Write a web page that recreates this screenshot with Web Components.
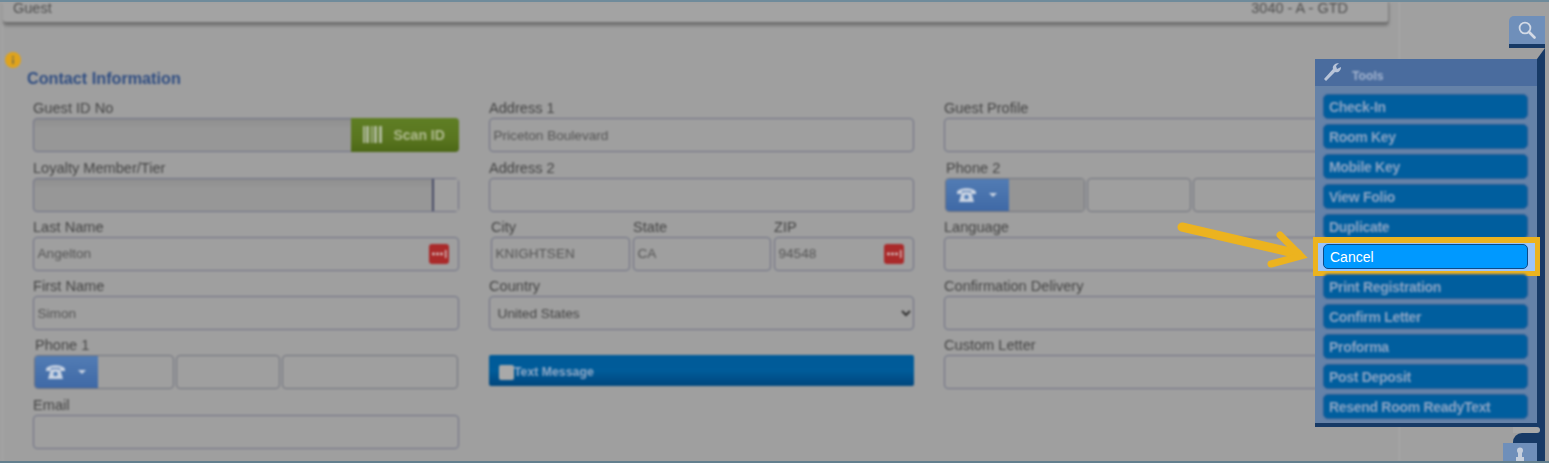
<!DOCTYPE html>
<html>
<head>
<meta charset="utf-8">
<title>Contact Information</title>
<style>
    html, body{
        margin: 0;
        height: 463px;
        overflow: hidden;
        background: #9f9f9f;
        font-family: "Liberation Sans", Arial, sans-serif;
    }
</style>
</head>
<body>
<guest-page>
    <header-card slot="head" left="Guest" right="3040 - A - GTD"></header-card>

    <form-column slot="form">
        <form-field label="Guest ID No"><text-box fill><scan-button></scan-button></text-box></form-field>
        <form-field label="Loyalty Member/Tier"><text-box fill split></text-box></form-field>
        <form-field label="Last Name"><text-box badge>Angelton</text-box></form-field>
        <form-field label="First Name"><text-box>Simon</text-box></form-field>
        <form-field label="Phone 1" inset><phone-box></phone-box></form-field>
        <form-field label="Email"><text-box></text-box></form-field>
    </form-column>

    <form-column slot="form">
        <form-field label="Address 1"><text-box>Priceton Boulevard</text-box></form-field>
        <form-field label="Address 2"><text-box></text-box></form-field>
        <city-row></city-row>
        <form-field label="Country"><select-box>United States</select-box></form-field>
        <form-field label=""><text-button>Text Message</text-button></form-field>
    </form-column>

    <form-column slot="form">
        <form-field label="Guest Profile"><text-box></text-box></form-field>
        <form-field label="Phone 2" inset><phone-box fill></phone-box></form-field>
        <form-field label="Language"><text-box></text-box></form-field>
        <form-field label="Confirmation Delivery"><text-box></text-box></form-field>
        <form-field label="Custom Letter"><text-box></text-box></form-field>
    </form-column>

    <tools-panel slot="over">
        <tool-button>Check-In</tool-button>
        <tool-button>Room Key</tool-button>
        <tool-button>Mobile Key</tool-button>
        <tool-button>View Folio</tool-button>
        <tool-button>Duplicate</tool-button>
        <tool-button highlight>Cancel</tool-button>
        <tool-button>Print Registration</tool-button>
        <tool-button>Confirm Letter</tool-button>
        <tool-button>Proforma</tool-button>
        <tool-button>Post Deposit</tool-button>
        <tool-button>Resend Room ReadyText</tool-button>
    </tools-panel>
</guest-page>

<script>
const BLUR = "0.8px";

class GuestPage extends HTMLElement{
    constructor(){
        super();
        this.attachShadow({ mode: "open" });
    }

    connectedCallback(){
        this.shadowRoot.innerHTML = `
            <style>
                :host{
                    display: block;
                    position: relative;
                    width: 1549px;
                    height: 463px;
                    box-sizing: border-box;
                    border-top: 2px solid #6f8b9b;
                    border-bottom: 2px solid #637f8e;
                    overflow: hidden;
                    background: #a0a0a0;
                }
                #main{
                    width: 1398px;
                    height: 100%;
                    box-sizing: border-box;
                    margin-left: 2px;
                    border-left: 1px solid #a9a9a9;
                    border-right: 1px solid #ababab;
                    background: #9f9f9f;
                    filter: blur(${BLUR});
                }
                #info{
                    margin: 28px 0 -11px 2px;
                    width: 16px;
                    height: 16px;
                    display: block;
                }
                #title{
                    margin: 11px 0 0 24px;
                    height: 20px;
                    font-size: 16.2px;
                    line-height: 20px;
                    font-weight: 700;
                    color: #2f4d82;
                }
                #cols{
                    display: grid;
                    grid-template-columns: 426px 425px 426px;
                    column-gap: 30px;
                    margin: 5px 0 0 30px;
                }
                #side{
                    position: absolute;
                    left: 1537px;
                    top: 46px;
                    bottom: 0;
                    width: 8px;
                    background: #173a66;
                    clip-path: polygon(8px 0, 8px 100%, 0 100%, 0 11px);
                }
                #search{
                    position: absolute;
                    left: 1509px;
                    top: 14px;
                    width: 36px;
                    height: 28px;
                    border-bottom: 4px solid #173a66;
                    border-radius: 5px 0 0 0;
                    background: #6f8fba;
                    filter: blur(0.6px);
                }
                #search svg{ position: absolute; left: 9px; top: 5px; }
                #gap{
                    position: absolute;
                    left: 1513px;
                    top: 425px;
                    width: 27px;
                    height: 6px;
                    background: #a8a8a8;
                    border-radius: 0 4px 4px 0;
                }
                #curve{
                    position: absolute;
                    left: 1513px;
                    top: 431px;
                    width: 26px;
                    height: 10px;
                    background: #173a66;
                    border-radius: 9px 0 0 0;
                }
                #lock{
                    position: absolute;
                    left: 1503px;
                    top: 441px;
                    width: 34px;
                    height: 20px;
                    background: #6f8fba;
                    filter: blur(0.6px);
                }
                #lock svg{ position: absolute; left: 11px; top: 4px; }
                #arrow{
                    position: absolute;
                    left: 1170px;
                    top: 211px;
                }
            </style>
            <div id="main">
                <slot name="head"></slot>
                <svg id="info" viewBox="0 0 16 16">
                    <circle cx="8" cy="8" r="8" fill="#dfa31c"/>
                    <rect x="7" y="7" width="2" height="5" fill="#8f7a3c"/>
                    <rect x="7" y="4" width="2" height="2" fill="#8f7a3c"/>
                </svg>
                <div id="title">Contact Information</div>
                <div id="cols"><slot name="form"></slot></div>
            </div>
            <div id="side"></div>
            <div id="search">
                <svg width="18" height="18" viewBox="0 0 18 18" fill="none" stroke="#d3dae6" stroke-width="1.8">
                    <circle cx="7" cy="7" r="5.4"/>
                    <path d="M11 11 L16.5 16.5" stroke-width="2.6" stroke-linecap="round"/>
                </svg>
            </div>
            <div id="gap"></div>
            <div id="curve"></div>
            <div id="lock">
                <svg width="12" height="14" viewBox="0 0 12 14" fill="#c6cfdd">
                    <circle cx="6" cy="3.5" r="3"/>
                    <rect x="4" y="5" width="4" height="6"/>
                    <rect x="2" y="10" width="8" height="4"/>
                </svg>
            </div>
            <slot name="over"></slot>
            <svg id="arrow" width="145" height="62" viewBox="0 0 145 62" fill="none" stroke="#ecb31f">
                <path d="M12 14 L128 41" stroke-width="9" stroke-linecap="round"/>
                <path d="M110 22 L131 43 L101 51" stroke-width="7" stroke-linecap="round" stroke-linejoin="miter"/>
            </svg>
        `;
    }
}

class HeaderCard extends HTMLElement{
    constructor(){
        super();
        this.attachShadow({ mode: "open" });
    }

    connectedCallback(){
        this.shadowRoot.innerHTML = `
            <style>
                :host{
                    display: flex;
                    justify-content: space-between;
                    width: 1386px;
                    height: 22px;
                    box-sizing: border-box;
                    padding: 0 40px 0 10px;
                    border-bottom: 2px solid #6f6f6f;
                    border-right: 1px solid #7d7d7d;
                    border-radius: 0 0 4px 4px;
                    background: #a3a3a3;
                    box-shadow: 0 2px 3px rgba(0,0,0,.25);
                    font-size: 14.5px;
                    line-height: 13px;
                    color: #4e4e4e;
                }
            </style>
            <span>${this.getAttribute("left")}</span>
            <span>${this.getAttribute("right")}</span>
        `;
    }
}

class FormColumn extends HTMLElement{
    constructor(){
        super();
        this.attachShadow({ mode: "open" });
    }

    connectedCallback(){
        this.shadowRoot.innerHTML = `
            <style>
                :host{ display: block; }
            </style>
            <slot></slot>
        `;
    }
}

class FormField extends HTMLElement{
    constructor(){
        super();
        this.attachShadow({ mode: "open" });
    }

    connectedCallback(){
        this.shadowRoot.innerHTML = `
            <style>
                :host{
                    display: block;
                    height: 59.25px;
                }
                #label{
                    height: 18px;
                    padding-top: 7.25px;
                    font-size: 14.6px;
                    line-height: 16px;
                    color: #444;
                    white-space: nowrap;
                }
                :host([inset]) #label{ padding-left: 2px; }
            </style>
            <div id="label">${this.getAttribute("label")}</div>
            <slot></slot>
        `;
    }
}

class TextBox extends HTMLElement{
    constructor(){
        super();
        this.attachShadow({ mode: "open" });
    }

    connectedCallback(){
        let badge = this.hasAttribute("badge") ? `
            <svg id="badge" width="20" height="20" viewBox="0 0 20 20">
                <rect width="20" height="20" rx="3" fill="#aa2a2a"/>
                <circle cx="4.5" cy="10" r="1.4" fill="#d8c8c8"/>
                <circle cx="8.5" cy="10" r="1.4" fill="#d8c8c8"/>
                <circle cx="12.5" cy="10" r="1.4" fill="#d8c8c8"/>
                <rect x="16" y="6" width="1.4" height="8" fill="#d8c8c8"/>
            </svg>` : "";
        let split = this.hasAttribute("split") ? `<div id="split"></div>` : "";
        this.shadowRoot.innerHTML = `
            <style>
                :host{
                    display: flex;
                    position: relative;
                    align-items: center;
                    box-sizing: border-box;
                    height: 34px;
                    padding-left: 3.5px;
                    border: 1.5px solid #6e7085;
                    border-radius: 4px;
                    font-size: 13.6px;
                    color: #555;
                }
                :host([fill]){
                    background: linear-gradient(#8f8f8f, #979797 30%, #979797);
                }
                #text{ flex: 1; white-space: nowrap; }
                #badge{ margin-right: 9.5px; }
                #split{
                    align-self: stretch;
                    width: 24px;
                    border-left: 2px solid #484c66;
                    background: #9f9f9f;
                }
            </style>
            <div id="text"><slot></slot></div>
            ${badge}
            ${split}
        `;
    }
}

class ScanButton extends HTMLElement{
    constructor(){
        super();
        this.attachShadow({ mode: "open" });
    }

    connectedCallback(){
        this.shadowRoot.innerHTML = `
            <style>
                :host{
                    position: absolute;
                    top: -1.5px;
                    right: -0.5px;
                    display: flex;
                    align-items: center;
                    gap: 12px;
                    box-sizing: border-box;
                    width: 108px;
                    height: 34px;
                    padding-left: 12px;
                    border-radius: 0 4px 4px 0;
                    background: linear-gradient(#5f7e24, #59761f 60%, #4c6716);
                    color: #b0bb90;
                    font-size: 14px;
                    font-weight: 700;
                }
            </style>
            <svg width="19" height="17" viewBox="0 0 19 17" fill="#aeb99a">
                <rect x="0" width="2" height="17"/>
                <rect x="3" width="3" height="17"/>
                <rect x="8" width="1.5" height="17"/>
                <rect x="11" width="3" height="17"/>
                <rect x="16" width="3" height="17"/>
            </svg>
            <span>Scan ID</span>
        `;
    }
}

class PhoneBox extends HTMLElement{
    constructor(){
        super();
        this.attachShadow({ mode: "open" });
    }

    connectedCallback(){
        this.shadowRoot.innerHTML = `
            <style>
                :host{
                    display: flex;
                    gap: 2px;
                    height: 34px;
                    padding-left: 1px;
                    padding-right: 1px;
                }
                div{
                    box-sizing: border-box;
                    border: 1.5px solid #70727d;
                    border-radius: 4px;
                }
                #first{
                    display: flex;
                    width: 140px;
                    overflow: hidden;
                }
                #drop{
                    display: flex;
                    align-items: center;
                    gap: 13px;
                    box-sizing: border-box;
                    width: 62.5px;
                    height: 100%;
                    padding-left: 10.5px;
                    background: linear-gradient(#527cb4, #3f69a6);
                    flex: none;
                }
                #rest{ flex: 1; }
                :host([fill]) #rest{ background: #959595; }
                #mid{ width: 104px; }
                #last{ flex: 1; }
            </style>
            <div id="first">
                <span id="drop">
                    <svg width="19" height="16" viewBox="0 0 19 16" fill="#c9d3e2">
                        <path d="M0 5 C2 0 17 0 19 5 L19 7 L14 7 L14 4 L5 4 L5 7 L0 7 Z"/>
                        <path d="M4 8 L6 5 L13 5 L15 8 L17 15 L2 15 Z"/>
                        <circle cx="9.5" cy="10" r="2.2" fill="#4f7cb8"/>
                    </svg>
                    <svg width="8" height="4" viewBox="0 0 8 4" fill="#c9d3e2"><path d="M0 0 L8 0 L4 4 Z"/></svg>
                </span>
                <span id="rest"></span>
            </div>
            <div id="mid"></div>
            <div id="last"></div>
        `;
    }
}

class SelectBox extends HTMLElement{
    constructor(){
        super();
        this.attachShadow({ mode: "open" });
    }

    connectedCallback(){
        this.shadowRoot.innerHTML = `
            <style>
                :host{
                    display: flex;
                    align-items: center;
                    justify-content: space-between;
                    box-sizing: border-box;
                    height: 34px;
                    padding: 0 2.5px 0 7.5px;
                    border: 1.5px solid #6e7085;
                    border-radius: 4px;
                    font-size: 13.7px;
                    color: #444;
                }
            </style>
            <span><slot></slot></span>
            <svg width="10" height="7" viewBox="0 0 10 7" fill="none" stroke="#333" stroke-width="2"><path d="M1 1 L5 5 L9 1"/></svg>
        `;
    }
}

class CityRow extends HTMLElement{
    constructor(){
        super();
        this.attachShadow({ mode: "open" });
    }

    connectedCallback(){
        this.shadowRoot.innerHTML = `
            <style>
                :host{
                    display: grid;
                    grid-template-columns: 139px 138px 140px;
                    column-gap: 3px;
                    padding-left: 2px;
                }
            </style>
            <form-field label="City"><text-box>KNIGHTSEN</text-box></form-field>
            <form-field label="State"><text-box>CA</text-box></form-field>
            <form-field label="ZIP"><text-box badge>94548</text-box></form-field>
        `;
    }
}

class TextButton extends HTMLElement{
    constructor(){
        super();
        this.attachShadow({ mode: "open" });
    }

    connectedCallback(){
        this.shadowRoot.innerHTML = `
            <style>
                :host{
                    display: flex;
                    align-items: center;
                    box-sizing: border-box;
                    height: 31px;
                    padding: 3px 0 0 10px;
                    border-radius: 2px;
                    background: linear-gradient(#005a98, #005c9a 50%, #00467d);
                    font-size: 12.3px;
                    font-weight: 700;
                    color: #92aac8;
                }
                #check{
                    width: 15px;
                    height: 15px;
                    border-radius: 2px;
                    background: #a9a9a9;
                    flex: none;
                }
            </style>
            <span id="check"></span>
            <span><slot></slot></span>
        `;
    }
}

class ToolsPanel extends HTMLElement{
    constructor(){
        super();
        this.attachShadow({ mode: "open" });
    }

    connectedCallback(){
        this.shadowRoot.innerHTML = `
            <style>
                :host{
                    position: absolute;
                    left: 1315px;
                    top: 57px;
                    display: block;
                    box-sizing: border-box;
                    width: 222px;
                    height: 368px;
                    border-bottom: 4px solid #173a66;
                    background: #6582a8;
                }
                #head{
                    display: flex;
                    align-items: center;
                    gap: 11px;
                    height: 27px;
                    padding-left: 9px;
                    background: #4a6c9e;
                    font-size: 12.2px;
                    font-weight: 700;
                    color: #a3b4cf;
                }
                #head div{ padding-top: 6px; filter: blur(${BLUR}); }
                #head svg{ margin-top: -1px; }
                #list{
                    display: flex;
                    flex-direction: column;
                    gap: 5px;
                    padding: 8px 9px 0 8px;
                }
            </style>
            <div id="head">
                <svg width="17" height="18" viewBox="0 0 17 18" fill="#b8c4d8" style="filter: blur(0.6px)">
                    <path d="M0 16 L9 6 C8 3 11 0 15 0 L12 3 L13 6 L17 4 C17 8 14 10 11 9 L2 18 Z"/>
                </svg>
                <div>Tools</div>
            </div>
            <div id="list"><slot></slot></div>
        `;
    }
}

class ToolButton extends HTMLElement{
    constructor(){
        super();
        this.attachShadow({ mode: "open" });
    }

    connectedCallback(){
        this.shadowRoot.innerHTML = `
            <style>
                :host{
                    display: block;
                    position: relative;
                    height: 25px;
                }
                #btn{
                    position: relative;
                    box-sizing: border-box;
                    height: 25px;
                    padding-left: 5px;
                    border: 1px solid #2d5f98;
                    border-radius: 5px;
                    background: #005e9e;
                    font-size: 14px;
                    line-height: 25px;
                    font-weight: 700;
                    letter-spacing: -0.3px;
                    white-space: nowrap;
                    color: #8ea6c6;
                    filter: blur(${BLUR});
                }
                :host([highlight]) #btn{
                    padding-left: 6px;
                    border-color: #0d4a88;
                    background: #0099ff;
                    font-weight: 400;
                    letter-spacing: 0;
                    color: #fff;
                    filter: none;
                }
                #box{
                    position: absolute;
                    left: -10px;
                    right: -12px;
                    top: -7px;
                    bottom: -7px;
                    border: 5px solid #ecb31f;
                    border-top-width: 6px;
                    background: #9cc4fa;
                }
            </style>
            ${this.hasAttribute("highlight") ? `<div id="box"></div>` : ""}
            <div id="btn"><slot></slot></div>
        `;
    }
}

customElements.define("guest-page", GuestPage);
customElements.define("header-card", HeaderCard);
customElements.define("form-column", FormColumn);
customElements.define("form-field", FormField);
customElements.define("text-box", TextBox);
customElements.define("scan-button", ScanButton);
customElements.define("phone-box", PhoneBox);
customElements.define("select-box", SelectBox);
customElements.define("city-row", CityRow);
customElements.define("text-button", TextButton);
customElements.define("tools-panel", ToolsPanel);
customElements.define("tool-button", ToolButton);
</script>
</body>
</html>
